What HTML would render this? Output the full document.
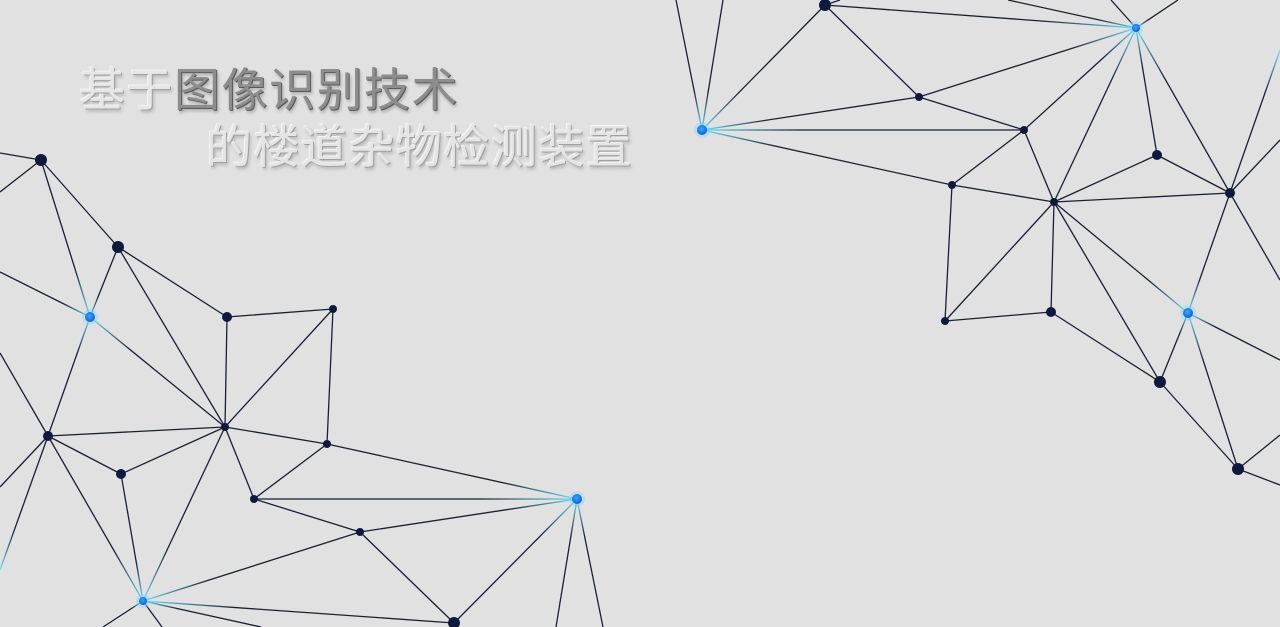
<!DOCTYPE html>
<html><head><meta charset="utf-8"><style>
html,body{margin:0;padding:0;width:1280px;height:627px;overflow:hidden;background:#e1e1e1}
svg{position:absolute;left:0;top:0}
.t{position:absolute;font-family:"Liberation Sans","Noto Sans CJK SC",sans-serif;font-size:46px;line-height:1;white-space:nowrap;letter-spacing:1.5px}
#t1{left:79px;top:67px}
#t2{left:206px;top:124px;color:#e4e4e4;text-shadow:1px 1px 0 #a0a0a0,-1px -1px 0 #f4f4f4,2px 3px 3px rgba(0,0,0,.2)}
.l{color:#e6e6e6;text-shadow:1px 1px 0 #a0a0a0,-1px -1px 0 #f4f4f4,2px 3px 3px rgba(0,0,0,.2)}
.d{color:#8d8d8d;text-shadow:1px 1px 0 #5a5a5a,2px 3px 3px rgba(0,0,0,.25)}
</style></head><body>
<svg id="s" width="1280" height="627" viewBox="0 0 1280 627"><defs>
<radialGradient id="bn" cx="45%" cy="40%" r="60%"><stop offset="0" stop-color="#3aa8ff"/><stop offset="1" stop-color="#0a5fd6"/></radialGradient>
</defs><g id="e"></g><g id="n"></g></svg>
<div class="t" id="t1"><span class="l">基于</span><span class="d">图像识别技术</span></div>
<div class="t" id="t2">的楼道杂物检测装置</div>
<script>
var N={A:[41,160,6],B:[118,247,6],C:[90,317,5,1],D:[227,317,5],E:[333,309,4],F:[225,427,4],G:[48,436,5],H:[121,474,5],I:[327,444,4],J:[254,499,4],K:[577,499,5,1],L:[360,532,4],M:[143,601,4,1],N:[454,623,6],
P:[702,130,5,1],Q:[825,5,6],R:[1136,28,4,1],S:[919,97,4],T:[1024,130,4],U:[952,185,4],V:[1054,202,4],W:[1157,155,5],X:[1230,193,5],Y:[1188,313,5,1],Z:[945,321,4],AA:[1051,312,5],AB:[1160,382,6],AC:[1238,469,6]};
function p(k){return typeof k=="string"?N[k]:k}
var E=[[[0,153],"A"],["A",[0,192]],["A","C"],["A","B"],["B","C"],["B","D"],["B","F"],[[0,272],"C"],["C","F"],["C","G"],[[0,353],"G"],["D","E"],["D","F"],["E","F"],["E","I"],["F","G"],["F","H"],["F","I"],["F","J"],["F","M"],["G","H"],["G","M"],["G",[0,487]],["G",[0,570]],["H","M"],["I","J"],["I","K"],["J","K"],["J","L"],["L","K"],["L","M"],["L","N"],["M","N"],["K","N"],["K",[556,627]],["K",[603,627]],["M",[103,627]],["M",[162,627]],["M",[261,627]],
["P",[676,0]],["P",[723,0]],["P","Q"],["P","S"],["P","T"],["P","U"],["Q",[840,0]],["Q","R"],["Q","S"],[[1008,0],"R"],[[1111,0],"R"],["R",[1178,0]],["R","S"],["R","T"],["R","V"],["R","W"],["R","X"],["S","T"],["T","U"],["T","V"],["U","V"],["U","Z"],["V","W"],["V","X"],["V","Z"],["V","AA"],["V","AB"],["V","Y"],["W","X"],["X",[1280,50]],["X",[1280,140]],["X",[1280,280]],["X","Y"],["Y","AB"],["Y","AC"],["Y",[1280,360]],["AB","AC"],["AA","AB"],["Z","AA"],["AC",[1280,435]],["AC",[1280,485]]];
var eg=document.getElementById("e"),ng=document.getElementById("n"),defs=document.querySelector("defs"),h="",d="",i=0;
E.forEach(function(e){var a=p(e[0]),b=p(e[1]),s="#1a1f33";
 var ab=a[3], bb=b[3];
 if(e[1][1]==570||(e[1][0]==1280&&e[1][1]==50)) bb=1;
 if(ab||bb){i++;d+='<linearGradient id="g'+i+'" gradientUnits="userSpaceOnUse" x1="'+a[0]+'" y1="'+a[1]+'" x2="'+b[0]+'" y2="'+b[1]+'">'+
  (ab?'<stop offset="0" stop-color="#6fe6ff"/><stop offset=".3" stop-color="#1a1f33"/>':'<stop offset="0" stop-color="#1a1f33"/>')+
  (bb?'<stop offset=".7" stop-color="#1a1f33"/><stop offset="1" stop-color="#6fe6ff"/>':'<stop offset="1" stop-color="#1a1f33"/>')+'</linearGradient>';s="url(#g"+i+")";}
 h+='<line x1="'+a[0]+'" y1="'+a[1]+'" x2="'+b[0]+'" y2="'+b[1]+'" stroke="'+s+'" stroke-width="1.3"/>';});
defs.insertAdjacentHTML("beforeend",d);eg.innerHTML=h;h="";
for(var k in N){var n=N[k];if(n[3])h+='<circle cx="'+n[0]+'" cy="'+n[1]+'" r="'+(n[2]+3)+'" fill="#5fd0ff" opacity=".25"/><circle cx="'+n[0]+'" cy="'+n[1]+'" r="'+n[2]+'" fill="url(#bn)"/>';else h+='<circle cx="'+n[0]+'" cy="'+n[1]+'" r="'+n[2]+'" fill="#0d1a3d"/>';}
ng.innerHTML=h;
</script>
</body></html>
